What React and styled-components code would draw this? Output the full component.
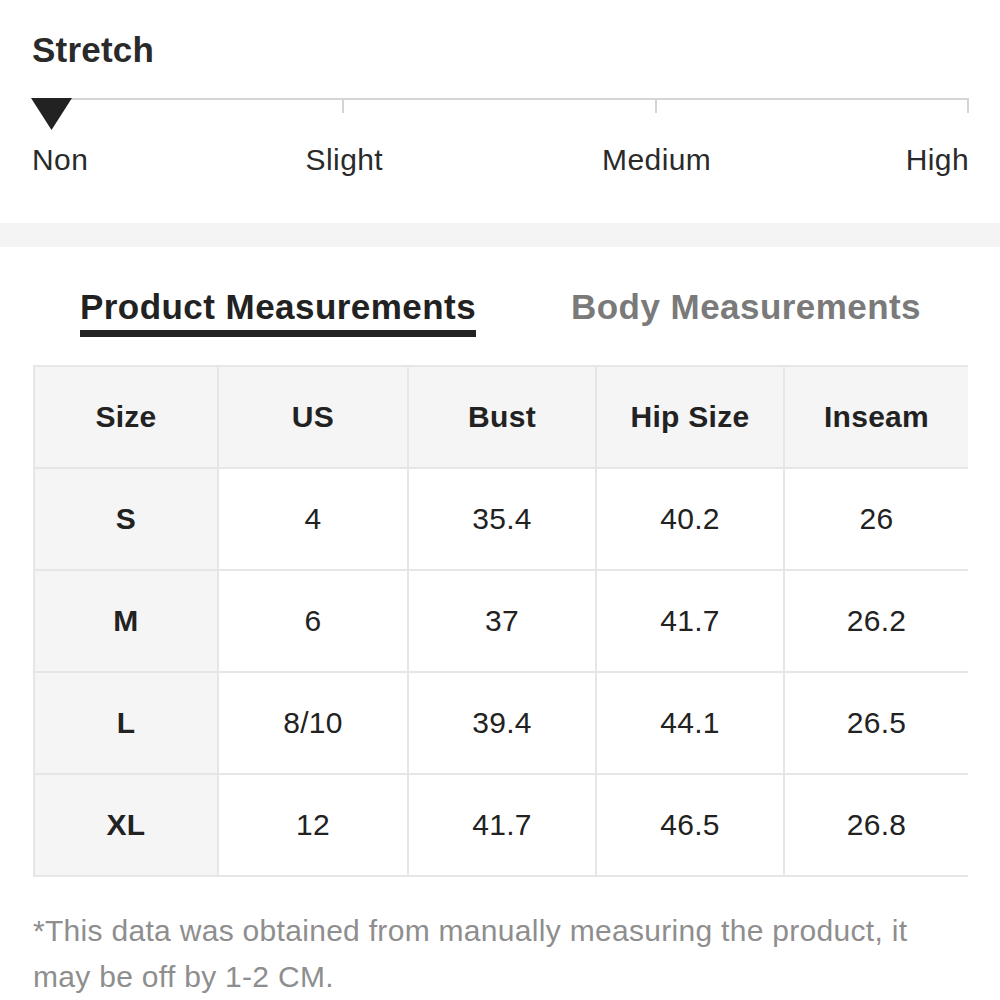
import styled, { createGlobalStyle } from "styled-components";

const Global = createGlobalStyle`
  html, body {
    margin: 0;
    padding: 0;
    background: #ffffff;
  }
  body {
    font-family: "Liberation Sans", Arial, sans-serif;
    color: #222222;
  }
`;

const Page = styled.div`
  width: 1000px;
  height: 1000px;
  overflow: hidden;
  background: #ffffff;
`;

const StretchSection = styled.section`
  padding: 30px 31px 0 32px;
  height: 193px;
  box-sizing: border-box;
`;

const Title = styled.h2`
  margin: 0;
  font-size: 35px;
  line-height: 40px;
  font-weight: 700;
  letter-spacing: 0.2px;
  color: #2a2a2a;
`;

const Scale = styled.div`
  position: relative;
  margin-top: 28px;
`;

const Track = styled.div`
  display: grid;
  grid-template-columns: repeat(3, 1fr);
  height: 15px;
`;

const Segment = styled.div`
  border-top: 2px solid #d4d4d4;
  border-right: 2px solid #d4d4d4;
`;

const Marker = styled.svg`
  position: absolute;
  left: -1px;
  top: 0;
`;

const Labels = styled.div`
  display: grid;
  grid-template-columns: repeat(6, 1fr);
  margin-top: 30px;
  font-size: 30px;
  line-height: 34px;
  letter-spacing: 0.4px;
  color: #2a2a2a;
`;

const Label = styled.span`
  grid-column: ${(p) => p.$span};
  text-align: ${(p) => p.$align};
`;

const Band = styled.div`
  height: 24px;
  margin-top: 30px;
  background: #f4f4f4;
`;

const Tabs = styled.div`
  display: flex;
  gap: 95px;
  padding: 40px 0 0 80px;
`;

const Tab = styled.div`
  font-size: 35px;
  line-height: 40px;
  font-weight: 700;
  letter-spacing: 0.45px;
  color: ${(p) => (p.$active ? "#222222" : "#7a7a7a")};
  padding-bottom: 3px;
  border-bottom: 7px solid ${(p) => (p.$active ? "#222222" : "transparent")};
`;

const Table = styled.div`
  display: grid;
  grid-template-columns: 182px 188px 186px 186px 183px;
  grid-auto-rows: 100px;
  gap: 2px;
  padding: 2px 0 2px 2px;
  margin: 28px 0 0 33px;
  width: 935px;
  box-sizing: border-box;
  background: #e6e6e6;
`;

const Cell = styled.div`
  display: flex;
  align-items: center;
  justify-content: center;
  font-size: 30px;
  letter-spacing: 0.3px;
  font-weight: ${(p) => (p.$head ? 700 : 400)};
  background: ${(p) => (p.$head ? "#f5f5f5" : "#ffffff")};
  color: #222222;
`;

const Note = styled.p`
  margin: 31px 80px 0 33px;
  font-size: 30px;
  line-height: 46px;
  letter-spacing: 0.3px;
  color: #8e8e8e;
`;

const heads = ["Size", "US", "Bust", "Hip Size", "Inseam"];
const rows = [
  ["S", "4", "35.4", "40.2", "26"],
  ["M", "6", "37", "41.7", "26.2"],
  ["L", "8/10", "39.4", "44.1", "26.5"],
  ["XL", "12", "41.7", "46.5", "26.8"],
];

export default function App() {
  return (
    <Page>
      <Global />
      <StretchSection>
        <Title>Stretch</Title>
        <Scale>
          <Track>
            <Segment />
            <Segment />
            <Segment />
          </Track>
          <Marker width="41" height="32" viewBox="0 0 41 32">
            <polygon points="0,0 41,0 20.5,32" fill="#222222" />
          </Marker>
        </Scale>
        <Labels>
          <Label $span="1 / 2" $align="left">Non</Label>
          <Label $span="2 / 4" $align="center">Slight</Label>
          <Label $span="4 / 6" $align="center">Medium</Label>
          <Label $span="6 / 7" $align="right">High</Label>
        </Labels>
      </StretchSection>
      <Band />
      <Tabs>
        <Tab $active>Product Measurements</Tab>
        <Tab>Body Measurements</Tab>
      </Tabs>
      <Table>
        {heads.map((h) => (
          <Cell key={h} $head>
            {h}
          </Cell>
        ))}
        {rows.map((r) =>
          r.map((v, i) => (
            <Cell key={r[0] + i} $head={i === 0}>
              {v}
            </Cell>
          ))
        )}
      </Table>
      <Note>
        *This data was obtained from manually measuring the product, it may be
        off by 1-2 CM.
      </Note>
    </Page>
  );
}
